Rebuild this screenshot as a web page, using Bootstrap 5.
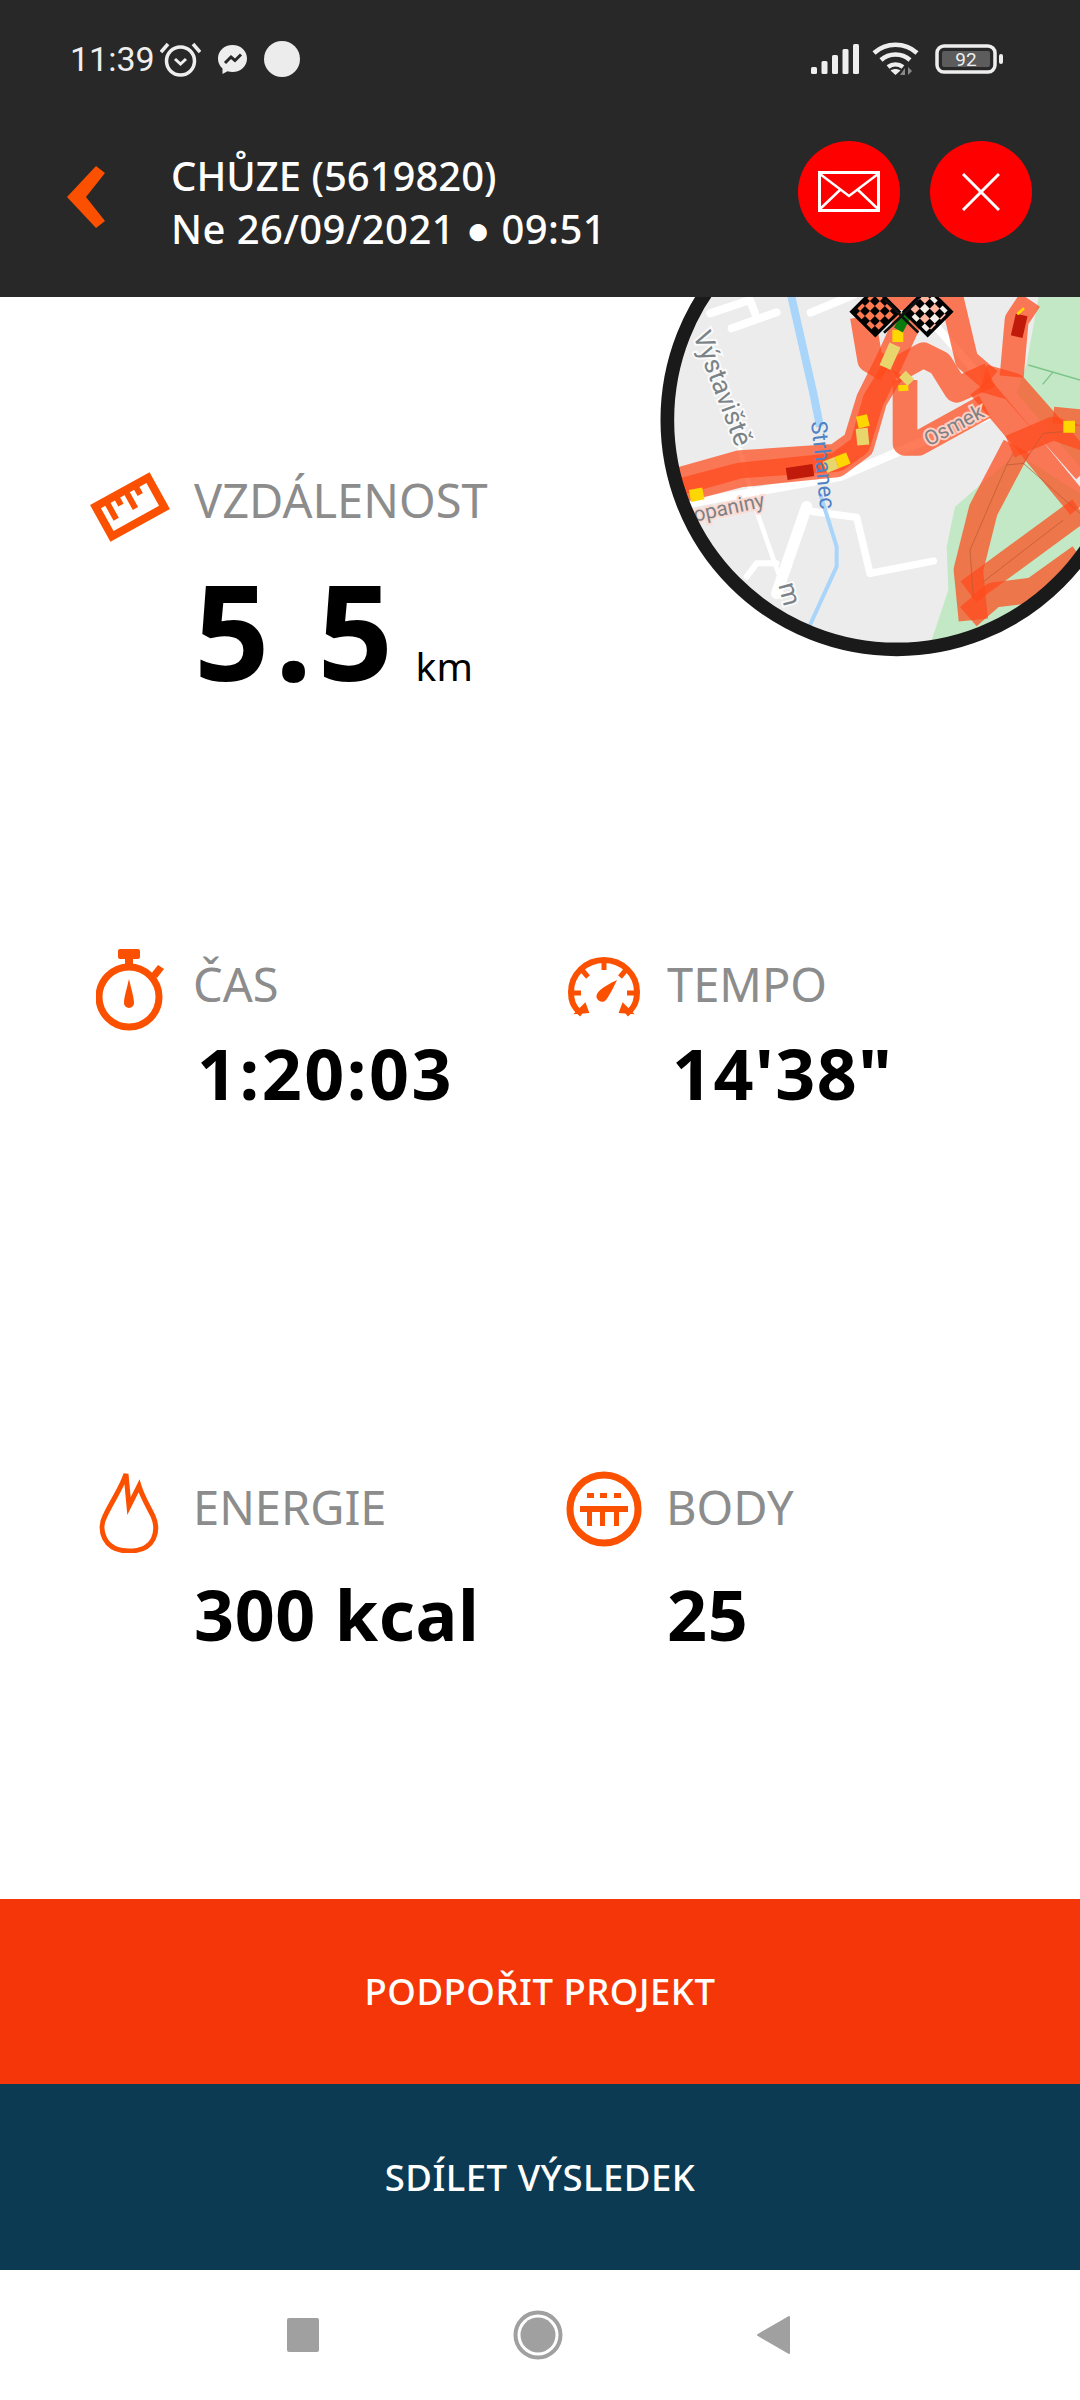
<!DOCTYPE html>
<html lang="cs">
<head>
    <meta charset="UTF-8">
    <title>Chůze</title>
    <link href="https://cdn.jsdelivr.net/npm/bootstrap@5.3.0/dist/css/bootstrap.min.css" rel="stylesheet">
    <style>
        body {
            width: 1080px;
            height: 2400px;
            overflow: hidden;
            font-family: "Noto Sans", sans-serif;
            background: #fff;
        }

        .app-shell { position: relative; height: 2400px; }

        /* horni cast */
        .top-head { position: relative; z-index: 2; height: 297px; background: #282828; color: #fff; }
        .status-line { height: 118px; padding: 0 77px 0 70px; }
        .status-time { font-family: Roboto, sans-serif; font-size: 34px; line-height: 1; color: #eee; width: 90px; }
        .status-dot { width: 36px; height: 36px; border-radius: 50%; background: #ececec; }
        .wifi-icon { margin-left: 13px; }
        .title-line { height: 179px; padding: 0 48px 32px 67px; gap: 30px; }
        .back-arrow { margin-top: 10px; }
        .title-text { margin-left: 36px; margin-top: 21px; font-size: 40px; line-height: 53px; font-weight: 500; white-space: nowrap; }
        .title-sub { letter-spacing: .45px; }
        .round-act { width: 102px; height: 102px; padding: 0; border: 0; border-radius: 50%; background: #f00; }
        .round-act:hover { background: #f00; }

        /* mapa */
        .map-round { position: absolute; left: 640px; top: 280px; width: 440px; height: 400px; z-index: 1; }
        .map-label { font-family: Roboto, sans-serif; font-size: 67px; fill: #7b8388; paint-order: stroke; stroke: #fff; stroke-width: 12px; stroke-opacity: .75; }
        .map-label-big { font-size: 79px; }
        .map-label-water { fill: #4f82c4; stroke: none; }
        .map-label-pink { font-size: 62px; stroke: #ffd9d0; stroke-opacity: .9; }

        /* statistiky */
        .stat-area { height: 1602px; padding-top: 178px; }
        .stat-row { display: flex; }
        .row-dist { height: 484px; }
        .row-time { height: 523px; }
        .stat-one { width: 540px; display: flex; }
        .stat-icon-box { flex: none; display: flex; }
        .stat-label { font-size: 47px; line-height: 50px; color: #8c8c8c; }
        .stat-big { margin-top: 38px; font-size: 132px; line-height: 134px; font-weight: 700; letter-spacing: 5.500px; color: #000; }
        .stat-unit { font-size: 39px; font-weight: 400; letter-spacing: 0; margin-left: 17px; }
        .stat-val { font-size: 70px; line-height: 80px; font-weight: 700; color: #000; white-space: nowrap; }
        .val-time { margin-top: 24px; margin-left: 4px; letter-spacing: 2.500px; }
        .val-tempo { margin-top: 24px; margin-left: 5px; letter-spacing: 1.500px; }
        .val-low { margin-top: 42px; margin-left: 1px; letter-spacing: .6px; }

        .pad-ruler { padding-left: 90px; }
        .pad-watch { padding-left: 96px; }
        .pad-flame { padding-left: 98px; }
        .pad-gauge { padding-left: 28px; }
        .pad-points { padding-left: 26px; }
        .box-ruler { width: 104px; }
        .box-watch { width: 97px; }
        .box-flame { width: 95px; }
        .box-gauge { width: 99px; }
        .box-points { width: 100px; }
        .icon-ruler { margin-top: -4px; }
        .icon-watch { margin-top: -10px; }
        .icon-gauge { margin-top: -2px; }
        .icon-flame { margin-top: -13px; }
        .icon-points { margin-top: -11px; }

        /* tlacitka dole */
        .wide-act { display: block; width: 100%; border: 0; border-radius: 0; color: #fff; font-size: 36.500px; font-weight: 500; line-height: 1; letter-spacing: .5px; }
        .wide-act:hover { color: #fff; }
        .act-orange { height: 185px; background: #f53609; }
        .act-orange:hover { background: #f53609; }
        .act-navy { height: 186px; background: #0b3a52; }
        .act-navy:hover { background: #0b3a52; }

        .sys-nav { height: 130px; background: #fff; padding: 0 290px 0 287px; }
    </style>
</head>

<body>
<div class="app-shell">

    <div class="top-head">
        <div class="status-line d-flex align-items-center justify-content-between">
            <div class="d-flex align-items-center">
                <span class="status-time">11:39</span>
                <svg width="41" height="36" viewBox="0 0 41 36" fill="none" stroke="#eee" stroke-width="3.5">
                    <circle cx="20.500" cy="20" r="14"/>
                    <path d="M1 11 8 3M40 11 33 3"/>
                    <path d="M15 18l5.500 5 5.500-5" stroke-width="3"/>
                </svg>
                <svg class="ms-3" width="31" height="31" viewBox="0 0 31 31">
                    <path fill="#eee" d="M15.500 1C7 1 1 7 1 14.500c0 4 1.600 7.500 4.500 10V30l5-2.700c1.600.5 3.200.7 5 .7 8.500 0 14.500-6 14.500-13.500S24 1 15.500 1z"/>
                    <path fill="none" stroke="#282828" stroke-width="3" d="M8 19l6-6 4 3.500 6-6"/>
                </svg>
                <span class="status-dot ms-3"></span>
            </div>
            <div class="d-flex align-items-center">
                <svg width="48" height="30" viewBox="0 0 48 30" fill="#eee">
                    <rect x="0" y="23" width="6" height="7" rx="1.500"/>
                    <rect x="10.500" y="17" width="6" height="13" rx="1.500"/>
                    <rect x="21" y="11" width="6" height="19" rx="1.500"/>
                    <rect x="31.500" y="5" width="6" height="25" rx="1.500"/>
                    <rect x="42" y="0" width="6" height="30" rx="1.500"/>
                </svg>
                <svg class="wifi-icon" width="47" height="34" viewBox="0 0 47 34" fill="none" stroke="#eee" stroke-width="4.500">
                    <path d="M2 11C14 0 33 0 45 11"/>
                    <path d="M9 18c8-7.500 21-7.500 29 0"/>
                    <path d="M16 25c4.500-3.500 10.500-3.500 15 0"/>
                    <path d="M23.500 33l-5-4.500c3-2 7-2 10 0z" fill="#eee" stroke="none"/>
                    <path d="M33 33v-7l-5 7zM36 33v-8l4 4z" fill="#8a8a8a" stroke="none"/>
                </svg>
                <svg class="ms-3" width="68" height="30" viewBox="0 0 68 30">
                    <rect x="2" y="2" width="58" height="26" rx="7" fill="none" stroke="#eee" stroke-width="3.500"/>
                    <rect x="7" y="7" width="48" height="16" rx="2" fill="#5c5c5c"/>
                    <rect x="64" y="10" width="4" height="10" rx="2" fill="#eee"/>
                    <text x="31" y="22" text-anchor="middle" font-family="Roboto, sans-serif" font-size="19" fill="#eee">92</text>
                </svg>
            </div>
        </div>
        <div class="title-line d-flex align-items-center">
            <svg class="back-arrow" width="38" height="62" viewBox="0 0 38 62">
                <path fill="#fb5000" d="M29 0 38 7 19 31 38 55 29 62 0 31z"/>
            </svg>
            <div class="title-text flex-grow-1">
                CHŮZE (5619820)<br>
                <span class="title-sub">Ne 26/09/2021 ● 09:51</span>
            </div>
            <button class="btn round-act d-flex align-items-center justify-content-center" type="button" aria-label="E-mail">
                <svg width="62" height="41" viewBox="0 0 62 41" fill="none" stroke="#fff">
                    <rect x="1.500" y="1.500" width="59" height="38" stroke-width="3"/>
                    <path d="M2 3l29 22L60 3M2 38l21-20M60 38 39 18" stroke-width="2.500"/>
                </svg>
            </button>
            <button class="btn round-act d-flex align-items-center justify-content-center" type="button" aria-label="Zavřít">
                <svg width="38" height="38" viewBox="0 0 38 38" fill="none" stroke="#fff" stroke-width="3">
                    <path d="M1 1l36 36M37 1 1 37"/>
                </svg>
            </button>
        </div>
    </div>

    <svg class="map-round" viewBox="0 0 1320 1200">
        <defs>
            <clipPath id="mapClip"><circle cx="770" cy="420" r="690"/></clipPath>
            <pattern id="checks" width="42" height="42" patternUnits="userSpaceOnUse">
                <rect width="42" height="42" fill="#000"/>
                <rect width="21" height="21" fill="#ff7a50"/>
                <rect x="21" y="21" width="21" height="21" fill="#ff7a50"/>
            </pattern>
            <pattern id="checksLight" width="42" height="42" patternUnits="userSpaceOnUse">
                <rect width="42" height="42" fill="#000"/>
                <rect width="21" height="21" fill="#f6f0ea"/>
                <rect x="21" y="21" width="21" height="21" fill="#ffb59e"/>
            </pattern>
        </defs>
        <g clip-path="url(#mapClip)">
            <rect width="1320" height="1200" fill="#ececec"/>
            <!-- les -->
            <path fill="#c3e8c5" d="M1205 0 1160 250 1130 340 1320 560V0zM945 680 1130 520 1320 640V1200H860L875 1080 925 930 920 800z"/>
            <path fill="none" stroke="#7cc48a" stroke-width="4" d="M1165 255 1320 300M1240 275 1208 313"/>
            <!-- cesty -->
            <g fill="none" stroke="#fff" stroke-linecap="round" stroke-linejoin="round">
                <path stroke-width="24" d="M210 100 330 60 345 100M275 145 410 97M512 98 640 45"/>
                <path stroke-width="14" d="M300 510 345 680 415 880"/>
                <path stroke-width="34" d="M410 940 500 680"/>
                <path stroke-width="22" d="M520 695 650 712 690 880 880 843"/>
                <path stroke-width="18" d="M320 890 350 850 410 850"/>
                <path stroke-width="26" d="M150 670 600 590 800 505 1040 410"/>
                <path stroke-width="24" d="M880 130 1030 300"/>
            </g>
            <!-- potok -->
            <path fill="none" stroke="#a9d5fa" stroke-width="24" d="M452 40 520 340 540 440"/>
            <path fill="none" stroke="#a9d5fa" stroke-width="12" d="M540 640 590 800 590 860 510 1035"/>

            <!-- trasa -->
            <g fill="none" stroke="#ff4a1c" stroke-opacity=".72" stroke-linejoin="round">
                <path stroke-width="84" d="M90 612 300 553 590 533 650 490 690 360 745 250 810 110"/>
                <path stroke-width="74" d="M90 640 300 585 590 555 665 500 705 360 760 270"/>
                <path stroke-width="76" d="M668 110 690 240 740 270"/>
                <path stroke-width="74" d="M795 300 795 490 835 490 1035 380"/>
                <path stroke-width="76" d="M760 275 850 225 900 250 950 330 1050 285"/>
                <path stroke-width="70" d="M930 30 980 240 1050 300"/>
                <path stroke-width="72" d="M1115 290 1130 120 1170 60"/>
                <path stroke-width="84" d="M1030 295 1120 320 1340 570"/>
                <path stroke-width="76" d="M1020 320 1180 510 1320 680"/>
                <path stroke-width="88" d="M1130 500 1030 690 985 870 1000 1020"/>
                <path stroke-width="78" d="M985 935 1320 690"/>
                <path stroke-width="76" d="M985 1010 1060 945 1180 930 1320 830"/>
                <path stroke-width="70" d="M1110 500 1240 445 1340 480"/>
                <path stroke-width="50" d="M1240 405 1340 415"/>
                <path stroke-width="100" d="M720 40 840 40"/>
            </g>
            <g fill="none" stroke="#b85a34" stroke-opacity=".7" stroke-width="3">
                <path d="M1120 520 1100 555 990 810 1000 950M1100 555 1150 550 1210 460 1270 455M1150 550 1320 700M1030 905 1270 720"/>
            </g>

            <!-- useky rychlosti -->
            <g fill="none" stroke-width="36">
                <path stroke="#ffd700" d="M150 648 190 640M590 548 625 534M652 428 685 420M757 168 790 168M1270 440 1305 440"/>
                <path stroke="#e8d56c" d="M555 562 590 548M665 445 670 495M765 195 735 262M810 285 790 305"/>
                <path stroke="#ffd700" stroke-width="18" d="M775 325 805 323"/>
                <path stroke="#bf1a0a" d="M440 582 520 570M1145 105 1130 170"/>
                <path stroke="#ffd700" stroke-width="8" d="M1132 103 1152 85M715 80 722 100"/>
                <path stroke="#0d7a0d" stroke-width="30" d="M775 150 805 95"/>
            </g>

            <!-- vlajky -->
            <g transform="rotate(45 706 95)"><rect x="656" y="45" width="100" height="100" fill="url(#checks)" stroke="#000" stroke-width="10"/></g>
            <g transform="rotate(45 863 95)"><rect x="813" y="45" width="100" height="100" fill="url(#checksLight)" stroke="#000" stroke-width="10"/></g>
            <path stroke="#111" stroke-width="8" fill="none" d="M732 158 835 60M835 158 735 60"/>

            <!-- popisky -->
            <text class="map-label map-label-big" transform="translate(158 165) rotate(69)">Výstaviště</text>
            <text class="map-label map-label-water" transform="translate(513 425) rotate(84)">Strhanec</text>
            <text class="map-label map-label-pink" transform="translate(866 500) rotate(-28)">Osmek</text>
            <text class="map-label map-label-pink" transform="translate(165 725) rotate(-12)">opaniny</text>
            <text class="map-label map-label-big" transform="translate(415 915) rotate(75)">m</text>
        </g>
        <circle cx="770" cy="420" r="688" fill="none" stroke="#1a1a1a" stroke-width="41"/>
    </svg>

    <main class="stat-area">
        <div class="stat-row row-dist">
            <div class="stat-one pad-ruler">
                <div class="stat-icon-box box-ruler">
                    <svg class="icon-ruler" width="80" height="72" viewBox="0 0 80 72">
                        <g transform="rotate(-29 40 36)" fill="none" stroke="#fb5000" stroke-width="8">
                            <rect x="10" y="19" width="60" height="34"/>
                            <path d="M22 20v20M33 20v10M44 20v20M55 20v10" stroke-width="6"/>
                        </g>
                    </svg>
                </div>
                <div>
                    <div class="stat-label">VZDÁLENOST</div>
                    <div class="stat-big">5.5<span class="stat-unit">km</span></div>
                </div>
            </div>
        </div>
        <div class="stat-row row-time">
            <div class="stat-one pad-watch">
                <div class="stat-icon-box box-watch">
                    <svg class="icon-watch" width="68" height="82" viewBox="0 0 68 82" fill="#fb5000">
                        <rect x="22" y="0" width="22" height="10" rx="2"/>
                        <rect x="29" y="8" width="8" height="10"/>
                        <path d="M55 25l7-9 6 4-7 9z"/>
                        <circle cx="33" cy="48" r="30" fill="none" stroke="#fb5000" stroke-width="7"/>
                        <path d="M33 30c2 9 5 18 5 24a5 5 0 0 1-10 0c0-6 3-15 5-24z"/>
                    </svg>
                </div>
                <div>
                    <div class="stat-label">ČAS</div>
                    <div class="stat-val val-time">1:20:03</div>
                </div>
            </div>
            <div class="stat-one pad-gauge">
                <div class="stat-icon-box box-gauge">
                    <svg class="icon-gauge" width="72" height="64" viewBox="0 0 72 64" fill="none" stroke="#fb5000" stroke-width="6">
                        <path d="M14 57C4 50 3 42 3 35a33 32 0 0 1 66 0c0 7-1 15-11 22"/>
                        <path d="M8 56l9-9 3 8zM64 56l-9-9-3 8z" fill="#fb5000" stroke-width="2"/>
                        <path d="M36 4v9M14 13l6 7M58 13l-6 7M4 36h9M59 36h9" stroke-width="5"/>
                        <path d="M49 23C43 26 32 31 29 37a5.500 5.500 0 0 0 9 6c4-5 8-14 11-20z" fill="#fb5000" stroke="none"/>
                    </svg>
                </div>
                <div>
                    <div class="stat-label">TEMPO</div>
                    <div class="stat-val val-tempo">14'38"</div>
                </div>
            </div>
        </div>
        <div class="stat-row">
            <div class="stat-one pad-flame">
                <div class="stat-icon-box box-flame">
                    <svg class="icon-flame" width="62" height="84" viewBox="0 0 62 84" fill="none" stroke="#fb5000" stroke-width="5">
                        <path d="M28 5c1 10 2 22 3 32l10-20c3 10 9 20 14 30 6 14 3 35-24 35C5 82 0 60 7 47 15 30 23 20 28 5z"/>
                    </svg>
                </div>
                <div>
                    <div class="stat-label">ENERGIE</div>
                    <div class="stat-val val-low">300 kcal</div>
                </div>
            </div>
            <div class="stat-one pad-points">
                <div class="stat-icon-box box-points">
                    <svg class="icon-points" width="76" height="76" viewBox="0 0 76 76" fill="#fb5000">
                        <circle cx="38" cy="38" r="34" fill="none" stroke="#fb5000" stroke-width="7"/>
                        <rect x="21" y="22" width="7" height="5"/>
                        <rect x="34" y="22" width="7" height="5"/>
                        <rect x="48" y="22" width="7" height="5"/>
                        <rect x="14" y="35" width="48" height="6"/>
                        <rect x="21" y="41" width="5" height="14"/>
                        <rect x="34" y="41" width="5" height="14"/>
                        <rect x="48" y="41" width="5" height="14"/>
                    </svg>
                </div>
                <div>
                    <div class="stat-label">BODY</div>
                    <div class="stat-val val-low">25</div>
                </div>
            </div>
        </div>
    </main>

    <button class="btn wide-act act-orange" type="button">PODPOŘIT PROJEKT</button>
    <button class="btn wide-act act-navy" type="button">SDÍLET VÝSLEDEK</button>

    <div class="sys-nav d-flex align-items-center justify-content-between">
        <svg width="32" height="34" viewBox="0 0 32 34"><rect width="32" height="34" rx="2" fill="#a0a0a0"/></svg>
        <svg width="50" height="50" viewBox="0 0 50 50">
            <circle cx="25" cy="25" r="22.500" fill="none" stroke="#a0a0a0" stroke-width="4"/>
            <circle cx="25" cy="25" r="17.500" fill="#a0a0a0"/>
        </svg>
        <svg width="33" height="38" viewBox="0 0 33 38"><path fill="#a0a0a0" stroke="#a0a0a0" stroke-width="2" stroke-linejoin="round" d="M32 1v36L1 19z"/></svg>
    </div>
</div>

<script src="https://cdn.jsdelivr.net/npm/bootstrap@5.3.0/dist/js/bootstrap.bundle.min.js"></script>
</body>
</html>
